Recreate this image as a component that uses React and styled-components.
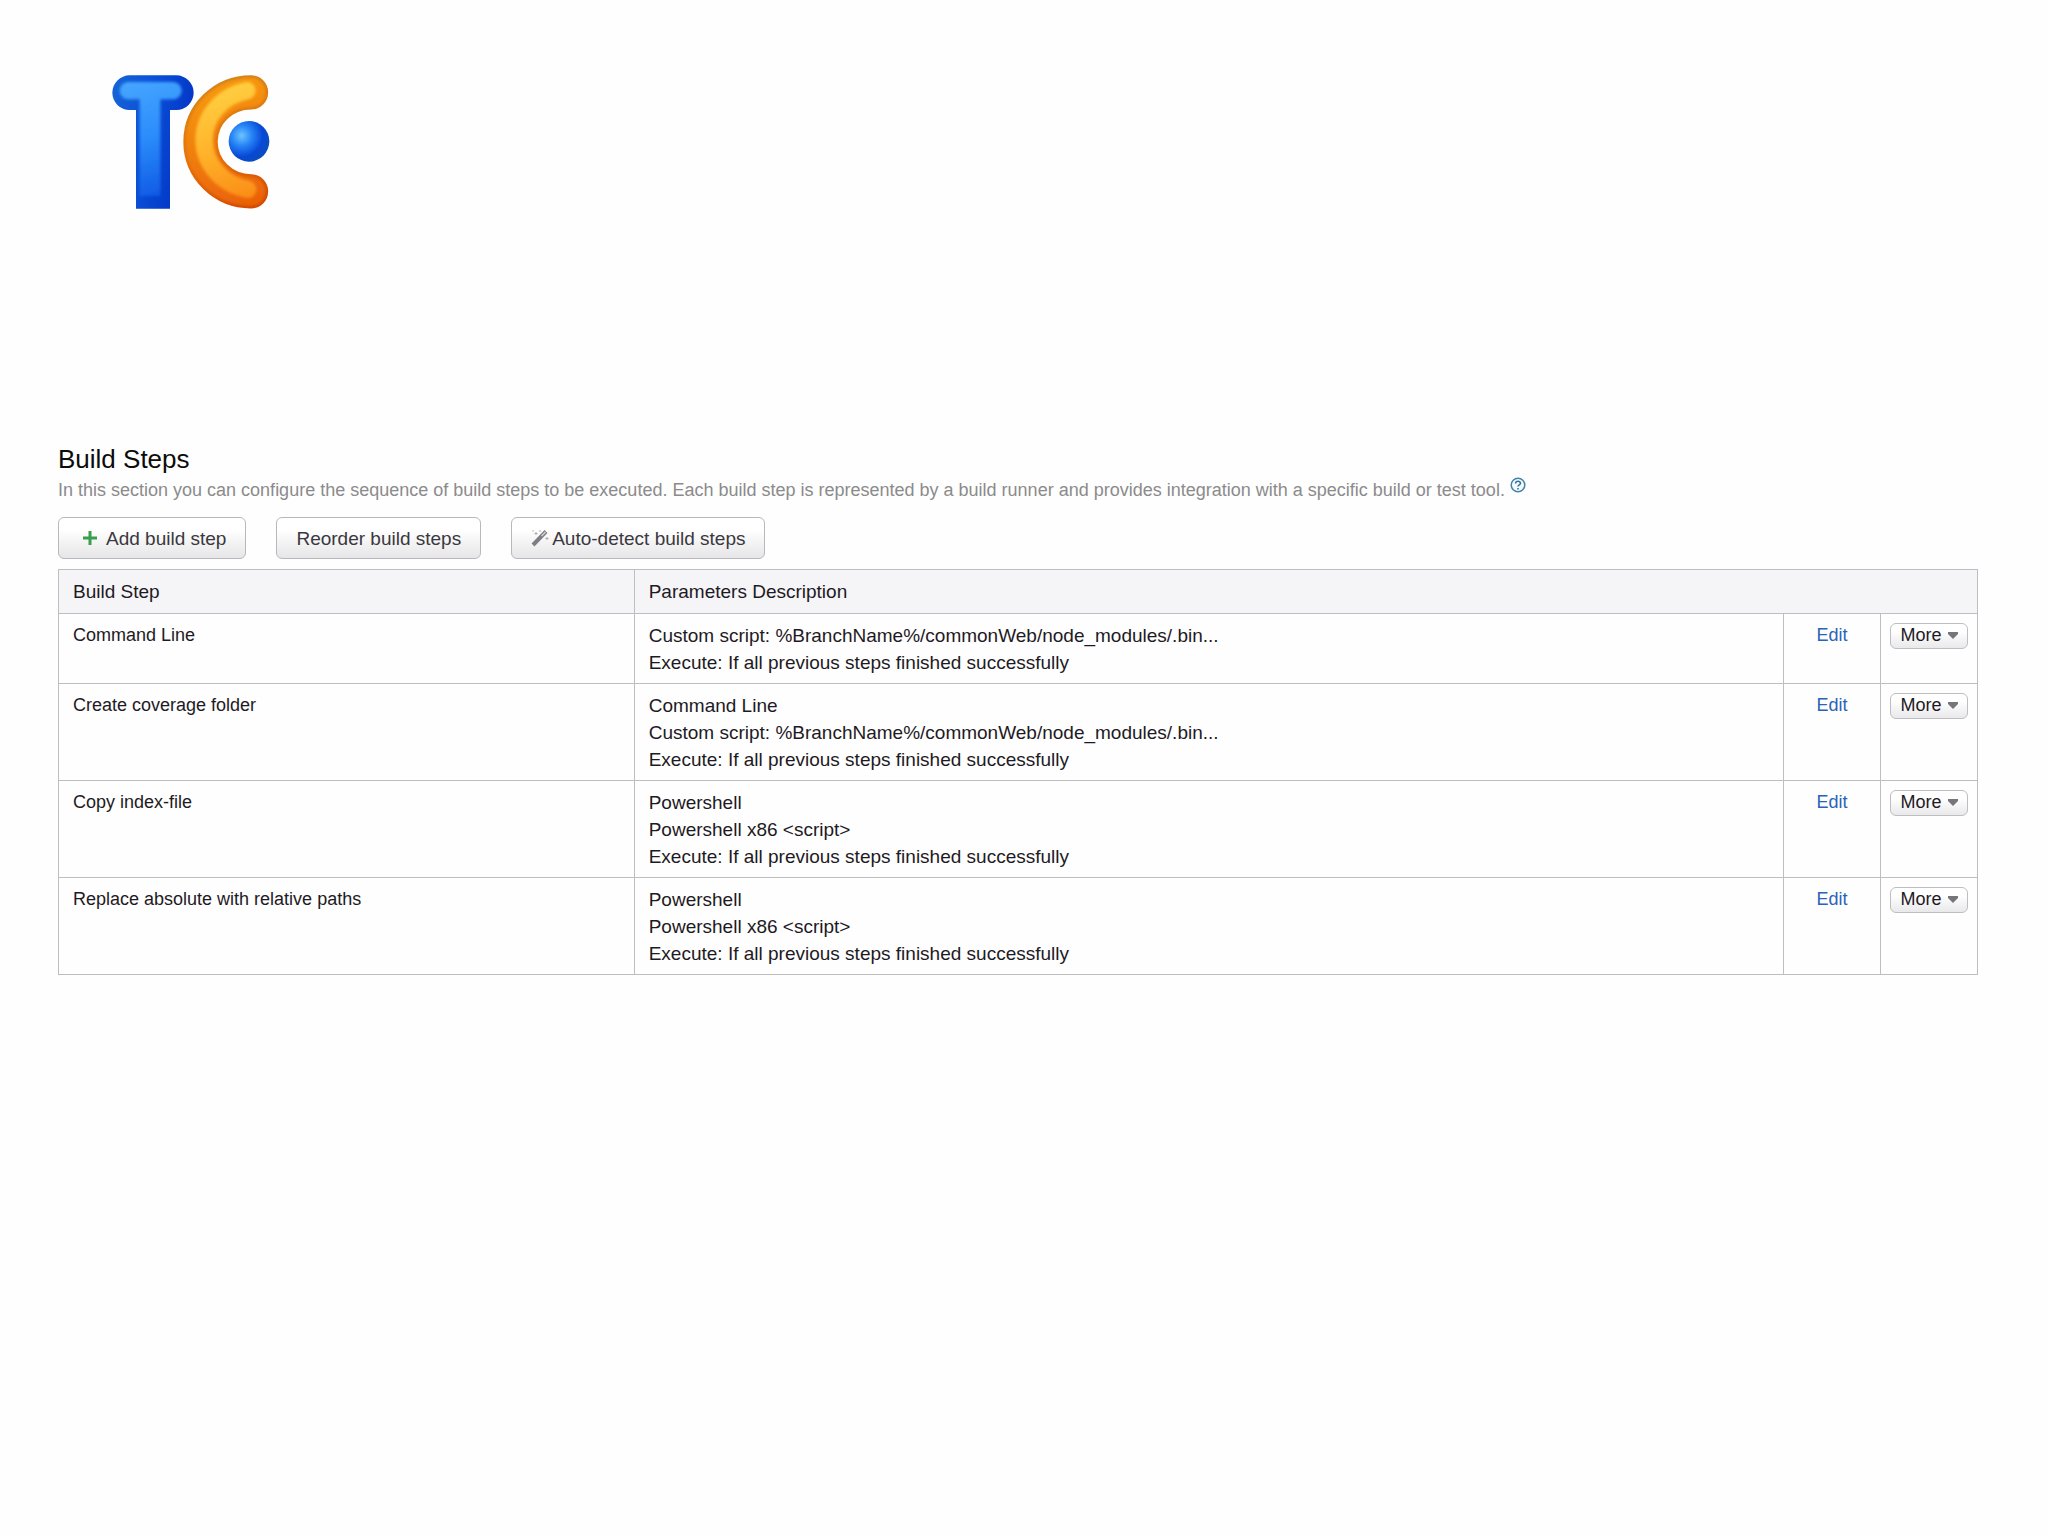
import React from 'react'
import styled, { createGlobalStyle } from 'styled-components';

const steps = [
  {
    name: 'Command Line',
    params: [
      'Custom script: %BranchName%/commonWeb/node_modules/.bin...',
      'Execute: If all previous steps finished successfully',
    ],
  },
  {
    name: 'Create coverage folder',
    params: [
      'Command Line',
      'Custom script: %BranchName%/commonWeb/node_modules/.bin...',
      'Execute: If all previous steps finished successfully',
    ],
  },
  {
    name: 'Copy index-file',
    params: [
      'Powershell',
      'Powershell x86 <script>',
      'Execute: If all previous steps finished successfully',
    ],
  },
  {
    name: 'Replace absolute with relative paths',
    params: [
      'Powershell',
      'Powershell x86 <script>',
      'Execute: If all previous steps finished successfully',
    ],
  },
]

function Logo() {
  const tee = 'M88 46H228A52 52 0 0 1 228 150H209V446H107V150H88A52 52 0 0 1 88 46Z'
  const cee = 'M452 97A151 148 0 0 0 452 394'
  return (
    <LogoSvg viewBox='36 45 472 402' role='img' aria-label='TeamCity'>
      <defs>
        <linearGradient id='teeEdge' x1='0' y1='0' x2='1' y2='0.3'>
          <stop offset='0' stopColor='#1565d6' />
          <stop offset='0.5' stopColor='#0a4fd8' />
          <stop offset='1' stopColor='#0336c4' />
        </linearGradient>
        <linearGradient id='teeFace' gradientUnits='userSpaceOnUse' x1='60' y1='60' x2='190' y2='420'>
          <stop offset='0' stopColor='#48a8ff' />
          <stop offset='0.5' stopColor='#2b8cfb' />
          <stop offset='1' stopColor='#0c55e2' />
        </linearGradient>
        <linearGradient id='ceeEdge' gradientUnits='userSpaceOnUse' x1='300' y1='60' x2='460' y2='440'>
          <stop offset='0' stopColor='#cf8420' />
          <stop offset='0.5' stopColor='#e4720a' />
          <stop offset='1' stopColor='#cf4604' />
        </linearGradient>
        <linearGradient id='ceeMid' gradientUnits='userSpaceOnUse' x1='330' y1='70' x2='440' y2='430'>
          <stop offset='0' stopColor='#f79a10' />
          <stop offset='1' stopColor='#ea6206' />
        </linearGradient>
        <linearGradient id='ceeFace' gradientUnits='userSpaceOnUse' x1='330' y1='70' x2='440' y2='430'>
          <stop offset='0' stopColor='#ffd243' />
          <stop offset='0.5' stopColor='#ffb42c' />
          <stop offset='1' stopColor='#fa8a14' />
        </linearGradient>
        <radialGradient id='ball' cx='0.32' cy='0.36' r='0.65'>
          <stop offset='0' stopColor='#6cc4ff' />
          <stop offset='0.4' stopColor='#2583f5' />
          <stop offset='0.8' stopColor='#0848d6' />
          <stop offset='1' stopColor='#0a4cc4' />
        </radialGradient>
        <filter id='soft' filterUnits='userSpaceOnUse' x='0' y='0' width='570' height='480'>
          <feGaussianBlur stdDeviation='4' />
        </filter>
      </defs>
      <path d={tee} fill='url(#teeEdge)' />
      <path d='M84 66H218A24 24 0 0 1 218 118H180V408H118V118H84A26 26 0 0 1 84 66Z' fill='url(#teeFace)' filter='url(#soft)' />
      <g fill='none' strokeLinecap='round'>
        <path d={cee} stroke='url(#ceeEdge)' strokeWidth='103' />
        <path d={cee} stroke='url(#ceeMid)' strokeWidth='88' filter='url(#soft)' />
        <path d='M440 92A162 151 0 0 0 442 388' stroke='url(#ceeFace)' strokeWidth='52' filter='url(#soft)' />
      </g>
      <circle cx='446' cy='244' r='61' fill='url(#ball)' />
    </LogoSvg>
  )
}

function PlusIcon() {
  return (
    <svg width='16' height='16' viewBox='0 0 16 16' aria-hidden='true'>
      <path d='M8 1V15M1 8H15' stroke='#3a9f4b' strokeWidth='3' />
    </svg>
  )
}

function WandIcon() {
  return (
    <svg width='18' height='18' viewBox='0 0 18 18' aria-hidden='true'>
      <path d='M2 16L15 2.500' stroke='#807e84' strokeWidth='4' />
      <path d='M10.500 7L14.500 3' stroke='#d4d2d7' strokeWidth='1.400' />
      <path d='M5 3v3M3.500 4.500h3M9 1v2M16 8v3M14.500 9.500h3M2 1v1.500' stroke='#aeacb1' strokeWidth='1' />
    </svg>
  )
}

function HelpIcon() {
  return (
    <svg width='16' height='16' viewBox='0 0 16 16' aria-hidden='true'>
      <circle cx='8' cy='8' r='6.800' fill='#f4fafd' stroke='#4584a5' strokeWidth='1.500' />
      <path d='M5.600 6.500C5.600 3.500 10.600 3.600 10.500 6.300C10.400 7.900 8 7.900 8 9.600M8 10.900V12.500' fill='none' stroke='#33759b' strokeWidth='1.600' />
    </svg>
  )
}

function StepRow({ name, params }) {
  return (
    <tr>
      <NameCell>{name}</NameCell>
      <Cell>
        {params.map(line => <Line key={line}>{line}</Line>)}
      </Cell>
      <ActionCell><EditLink href='#edit'>Edit</EditLink></ActionCell>
      <ActionCell>
        <MoreButton type='button'>
          More
          <svg width='10' height='7' viewBox='0 0 10 7' aria-hidden='true'>
            <path d='M0 0H10V2L5 7L0 2Z' fill='#77757a' />
          </svg>
        </MoreButton>
      </ActionCell>
    </tr>
  )
}

function App() {
  return (
    <Page>
      <GlobalStyle />
      <Header>
        <Logo />
      </Header>
      <main>
        <Title>Build Steps</Title>
        <Descrip>
          In this section you can configure the sequence of build steps to be executed. Each build step is represented by a build runner and provides integration with a specific build or test tool.
          <HelpLink href='#help' aria-label='Help'><HelpIcon /></HelpLink>
        </Descrip>
        <ButtonGroup>
          <ActionButton type='button' $wide><PlusIcon />Add build step</ActionButton>
          <ActionButton type='button'>Reorder build steps</ActionButton>
          <ActionButton type='button' $tight><WandIcon />Auto-detect build steps</ActionButton>
        </ButtonGroup>
        <Table>
          <colgroup>
            <NameCol />
            <col />
            <ActionCol />
            <ActionCol />
          </colgroup>
          <thead>
            <tr>
              <HeadCell scope='col'>Build Step</HeadCell>
              <HeadCell scope='col' colSpan={3}>Parameters Description</HeadCell>
            </tr>
          </thead>
          <tbody>
            {steps.map(step => <StepRow key={step.name} {...step} />)}
          </tbody>
        </Table>
      </main>
    </Page>
  )
}

export default App

const GlobalStyle = createGlobalStyle`
  * {
    box-sizing: border-box;
  }
  body {
    margin: 0;
    background: #fefefe;
    color: #1e1a24;
    font-family: "Liberation Sans", Arial, sans-serif;
    font-size: 18px;
    line-height: 27px;
  }
  button {
    font: inherit;
    color: inherit;
    cursor: pointer;
  }
`

const Page = styled.div`
  padding: 75px 70px 75px 58px;
`

const Header = styled.header`
  padding-left: 54px;
  margin-bottom: 232px;
`

const LogoSvg = styled.svg`
  display: block;
  width: 158px;
  height: 134px;
`

const Title = styled.h1`
  margin: 0;
  color: #0c0c0c;
  font-size: 26px;
  font-weight: 400;
  line-height: 36px;
`

const Descrip = styled.p`
  display: flex;
  align-items: flex-start;
  gap: 5px;
  margin: 0 0 13px;
  color: #8b8b8b;
`

const HelpLink = styled.a`
  display: flex;
`

const ButtonGroup = styled.div`
  display: flex;
  gap: 30px;
  margin-bottom: 10px;
`

const ActionButton = styled.button`
  display: flex;
  align-items: center;
  gap: ${props => (props.$tight ? '3px' : '8px')};
  height: 42px;
  padding: ${props => (props.$wide ? '0 19px 0 23px' : '0 19px')};
  border: 1px solid #b9b7bc;
  border-radius: 6px;
  background: linear-gradient(#ffffff 30%, #e6e5e7);
  color: #3a3840;
  font-size: 19px;
`

const Table = styled.table`
  width: 100%;
  table-layout: fixed;
  border-collapse: collapse;
`

const NameCol = styled.col`
  width: 30%;
`

const ActionCol = styled.col`
  width: 97px;
`

const HeadCell = styled.th`
  padding: 8px 14px;
  border: 1px solid #bfbdc2;
  background: #f5f4f7;
  font-size: 19px;
  font-weight: 400;
  text-align: left;
`

const Cell = styled.td`
  padding: 8px 14px 7px;
  border: 1px solid #bfbdc2;
  font-size: 19px;
  vertical-align: top;
`

const NameCell = styled(Cell)`
  font-size: 18px;
`

const ActionCell = styled(NameCell)`
  padding: 8px 0 7px;
  text-align: center;
`

const Line = styled.div``

const EditLink = styled.a`
  color: #2a63b8;
  text-decoration: none;
`

const MoreButton = styled.button`
  display: inline-flex;
  align-items: center;
  gap: 6px;
  height: 26px;
  padding: 0 9px;
  border: 1px solid #bfbdc2;
  border-radius: 6px;
  background: linear-gradient(#ffffff 30%, #e9e8ea);
`
